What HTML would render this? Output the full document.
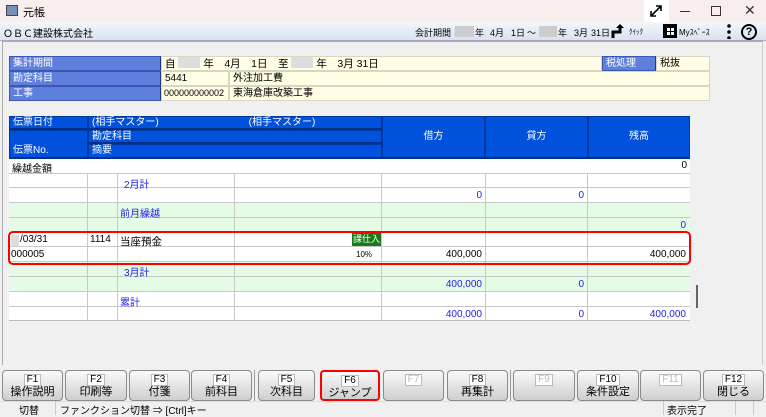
<!DOCTYPE html>
<html><head><meta charset="utf-8">
<style>
*{margin:0;padding:0;box-sizing:border-box}
body{width:766px;height:415px;overflow:hidden;background:#f0f0f0;font-family:"Liberation Sans","Noto Sans CJK JP",sans-serif;font-size:10px;color:#000;position:relative}
.a{position:absolute;white-space:nowrap}
.lbl{background:#5f7fdc;color:#fff;border:1px solid #3a58b0;border-right-color:#203a80;padding-left:3px;line-height:13px;height:15px}
.val{background:#fffde4;border:1px solid #d8d6c0;line-height:13px;height:15px;padding-left:3px}
.hd{background:#0052dc;color:#fff;border:1px solid #0038a0;border-bottom:2px solid #002f88}
.row{position:absolute;left:9px;width:681px;border-bottom:1px solid #c8c8c8}
.g{background:#e6fbe6}
.w{background:#fff}
.v{position:absolute;top:0;bottom:0;border-left:1px solid #c8c8c8}
.blue{color:#2020f0}
.btn{position:absolute;top:370px;height:31px;border:1px solid #8a8a8a;border-radius:4px;background:linear-gradient(#fafafa,#e4e4e4 50%,#cfcfcf);text-align:center;font-size:11px;line-height:13px;padding-top:2px}
.fk{display:inline-block;font-size:10px;background:#fff;border:1px solid #bbb;padding:0 2px;line-height:10px}
.dis .fk{color:#bbb}
.hb{position:absolute;top:26px;font-size:9px;white-space:nowrap}
.gb{position:absolute;top:26px;height:11px;background:#ccc}
</style></head><body>
<!-- title bar -->
<div class="a" style="left:0;top:0;width:766px;height:22px;background:#f8eeee"></div>
<div class="a" style="left:6px;top:5px;width:12px;height:11px;background:#7a8fb8;border:1px solid #445"></div>
<div class="a" style="left:23px;top:4px;font-size:11px">元帳</div>
<div class="a" style="left:644px;top:0;width:25px;height:22px;background:#fff"></div>
<svg class="a" style="left:648px;top:3px" width="16" height="16" viewBox="0 0 16 16"><path d="M3 13L13 3M8 3h5v5M3 8v5h5" stroke="#000" stroke-width="1.6" fill="none"/></svg>
<div class="a" style="left:680px;top:11px;width:10px;height:1px;background:#333"></div>
<div class="a" style="left:711px;top:6px;width:10px;height:10px;border:1px solid #333"></div>
<div class="a" style="left:744px;top:2px;font-size:14px;color:#333">✕</div>
<!-- header bar -->
<div class="a" style="left:0;top:22px;width:766px;height:19px;background:linear-gradient(#f4f7fb,#d8e2f0);border-bottom:1px solid #aab"></div>
<div class="a" style="left:3px;top:25px;font-size:10px">ＯＢＣ建設株式会社</div>
<div class="hb" style="left:415px">会計期間：</div>
<div class="gb" style="left:455px;width:19px"></div>
<div class="hb" style="left:475px">年</div>
<div class="hb" style="left:490px">4月</div>
<div class="hb" style="left:511px">1日</div>
<div class="hb" style="left:527px">～</div>
<div class="gb" style="left:539px;width:18px"></div>
<div class="hb" style="left:558px">年</div>
<div class="hb" style="left:574px">3月</div>
<div class="hb" style="left:591px">31日</div>
<svg class="a" style="left:611px;top:23px" width="18" height="16" viewBox="0 0 18 16"><path d="M2 15V9h7V4" stroke="#000" stroke-width="3" fill="none"/><path d="M5 5l4-4 4 4z" fill="#000"/></svg>
<div class="a" style="left:629px;top:27px;font-size:7px">ｸｲｯｸ</div>
<div class="a" style="left:663px;top:24px;width:14px;height:14px;background:#000"></div>
<div class="a" style="left:667px;top:28px;width:3px;height:3px;background:#fff"></div>
<div class="a" style="left:671px;top:28px;width:3px;height:3px;background:#fff"></div>
<div class="a" style="left:667px;top:32px;width:3px;height:3px;background:#fff"></div>
<div class="a" style="left:671px;top:32px;width:3px;height:3px;background:#fff"></div>
<div class="a" style="left:679px;top:27px;font-size:8px">Myｽﾍﾟｰｽ</div>
<div class="a" style="left:727px;top:23px;width:4px;height:16px;background:radial-gradient(circle,#000 1.6px,transparent 2px) 0 0/4px 6px"></div>
<div class="a" style="left:741px;top:24px;width:16px;height:16px;border:2px solid #000;border-radius:50%;text-align:center;font-weight:bold;font-size:11px;line-height:12px">?</div>
<!-- panel border -->
<div class="a" style="left:2px;top:41px;width:761px;height:324px;border:1px solid #aaa;border-bottom:none;border-right-color:#ccc"></div>
<!-- info -->
<div class="a lbl" style="left:9px;top:56px;width:152px">集計期間</div>
<div class="a lbl" style="left:9px;top:71px;width:152px">勘定科目</div>
<div class="a lbl" style="left:9px;top:86px;width:152px">工事</div>
<div class="a val" style="left:161px;top:56px;width:441px;font-size:10.5px">自 <span style="display:inline-block;width:22px;height:11px;background:#ddd;vertical-align:-1px"></span> 年　4月　1日　至 <span style="display:inline-block;width:22px;height:11px;background:#ddd;vertical-align:-1px"></span> 年　3月 31日</div>
<div class="a lbl" style="left:602px;top:56px;width:54px">税処理</div>
<div class="a val" style="left:656px;top:56px;width:54px">税抜</div>
<div class="a val" style="left:161px;top:71px;width:68px">5441</div>
<div class="a val" style="left:229px;top:71px;width:481px">外注加工費</div>
<div class="a val" style="left:161px;top:86px;width:68px;font-size:9px;padding-left:2px">000000000002</div>
<div class="a val" style="left:229px;top:86px;width:481px">東海倉庫改築工事</div>
<!-- table header -->
<div class="a hd" style="left:9px;top:116px;width:79px;height:14px;line-height:11px;padding-left:3px">伝票日付</div>
<div class="a hd" style="left:9px;top:130px;width:79px;height:29px;line-height:40px;padding-left:3px">伝票No.</div>
<div class="a hd" style="left:88px;top:116px;width:294px;height:14px;line-height:11px;padding-left:3px">(相手マスター)　　　　　　　　　(相手マスター)</div>
<div class="a hd" style="left:88px;top:130px;width:294px;height:14px;line-height:11px;padding-left:3px">勘定科目</div>
<div class="a hd" style="left:88px;top:144px;width:294px;height:15px;line-height:12px;padding-left:3px">摘要</div>
<div class="a hd" style="left:382px;top:116px;width:103px;height:43px;line-height:40px;text-align:center">借方</div>
<div class="a hd" style="left:485px;top:116px;width:103px;height:43px;line-height:40px;text-align:center">貸方</div>
<div class="a hd" style="left:588px;top:116px;width:102px;height:43px;line-height:40px;text-align:center">残高</div>
<!-- body -->
<div class="a w" style="left:9px;top:159px;width:681px;height:161px"></div>
<div class="row w" style="top:159px;height:15px"><span class="a" style="left:3px;top:1px">繰越金額</span><span class="a" style="right:3px;top:1px">0</span></div>
<div class="row w" style="top:174px;height:14px"></div>
<div class="row w" style="top:188px;height:15px"></div>
<div class="row g" style="top:203px;height:15px"></div>
<div class="row g" style="top:218px;height:15px"></div>
<div class="row w" style="top:233px;height:14px"></div>
<div class="row w" style="top:247px;height:15px"></div>
<div class="row g" style="top:262px;height:15px"></div>
<div class="row g" style="top:277px;height:15px"></div>
<div class="row w" style="top:292px;height:15px"></div>
<div class="row w" style="top:307px;height:13px;border-bottom:none"></div>
<div class="a" style="left:9px;top:174px;width:681px;height:146px">
 <div class="v" style="left:78px"></div><div class="v" style="left:108px"></div><div class="v" style="left:225px"></div><div class="v" style="left:372px"></div><div class="v" style="left:476px"></div><div class="v" style="left:578px"></div>
</div>
<div class="a" style="left:9px;top:320px;width:681px;height:1px;background:#bbb"></div>
<div class="a blue" style="left:124px;top:176px">2月計</div>
<div class="a blue" style="left:472px;top:190px;width:10px;text-align:right">0</div>
<div class="a blue" style="left:574px;top:190px;width:10px;text-align:right">0</div>
<div class="a blue" style="left:120px;top:205px">前月繰越</div>
<div class="a blue" style="left:676px;top:220px;width:10px;text-align:right">0</div>
<div class="a" style="left:11px;top:235px;width:8px;height:11px;background:#ddd"></div>
<div class="a" style="left:20px;top:234px">/03/31</div>
<div class="a" style="left:90px;top:234px">1114</div>
<div class="a" style="left:120px;top:234px;font-size:10.5px">当座預金</div>
<div class="a" style="left:352px;top:233px;width:29px;height:13px;background:#1a7a1a;color:#fff;font-size:9px;text-align:center;line-height:13px">課仕入</div>
<div class="a" style="left:11px;top:249px">000005</div>
<div class="a" style="left:356px;top:250px;font-size:8px">10%</div>
<div class="a" style="left:400px;top:249px;width:82px;text-align:right">400,000</div>
<div class="a" style="left:600px;top:249px;width:86px;text-align:right">400,000</div>
<div class="a blue" style="left:124px;top:264px">3月計</div>
<div class="a blue" style="left:400px;top:279px;width:82px;text-align:right">400,000</div>
<div class="a blue" style="left:574px;top:279px;width:10px;text-align:right">0</div>
<div class="a blue" style="left:120px;top:294px">累計</div>
<div class="a blue" style="left:400px;top:309px;width:82px;text-align:right">400,000</div>
<div class="a blue" style="left:574px;top:309px;width:10px;text-align:right">0</div>
<div class="a blue" style="left:600px;top:309px;width:86px;text-align:right">400,000</div>
<div class="a" style="left:8px;top:231px;width:683px;height:34px;border:2px solid #f00;border-radius:5px"></div>
<div class="a" style="left:696px;top:285px;width:2px;height:23px;background:#666"></div>
<!-- function keys -->
<div class="btn" style="left:2px;width:61px"><span class="fk">F1</span><br>操作説明</div>
<div class="btn" style="left:65px;width:62px"><span class="fk">F2</span><br>印刷等</div>
<div class="btn" style="left:129px;width:61px"><span class="fk">F3</span><br>付箋</div>
<div class="btn" style="left:191px;width:61px"><span class="fk">F4</span><br>前科目</div>
<div class="a" style="left:254px;top:370px;width:1px;height:31px;background:#999"></div>
<div class="btn" style="left:258px;width:57px"><span class="fk">F5</span><br>次科目</div>
<div class="btn" style="left:320px;width:60px;border:2px solid #f00"><span class="fk">F6</span><br>ジャンプ</div>
<div class="btn dis" style="left:383px;width:61px"><span class="fk">F7</span></div>
<div class="btn" style="left:447px;width:61px"><span class="fk">F8</span><br>再集計</div>
<div class="a" style="left:510px;top:370px;width:1px;height:31px;background:#999"></div>
<div class="btn dis" style="left:513px;width:62px"><span class="fk">F9</span></div>
<div class="btn" style="left:577px;width:62px"><span class="fk">F10</span><br>条件設定</div>
<div class="btn dis" style="left:640px;width:61px"><span class="fk">F11</span></div>
<div class="btn" style="left:703px;width:61px"><span class="fk">F12</span><br>閉じる</div>
<!-- status -->
<div class="a" style="left:0;top:401px;width:766px;height:14px;background:#f0f0f0;border-top:1px solid #ddd"></div>
<div class="a" style="left:19px;top:402px">切替</div>
<div class="a" style="left:55px;top:401px;width:1px;height:14px;background:#ccc"></div>
<div class="a" style="left:60px;top:402px">ファンクション切替 ⇒ [Ctrl]キー</div>
<div class="a" style="left:663px;top:401px;width:1px;height:14px;background:#ccc"></div>
<div class="a" style="left:667px;top:402px">表示完了</div>
<div class="a" style="left:735px;top:401px;width:1px;height:14px;background:#ccc"></div>
<div class="a" style="left:753px;top:401px;width:1px;height:14px;background:#ccc"></div>
</body></html>
